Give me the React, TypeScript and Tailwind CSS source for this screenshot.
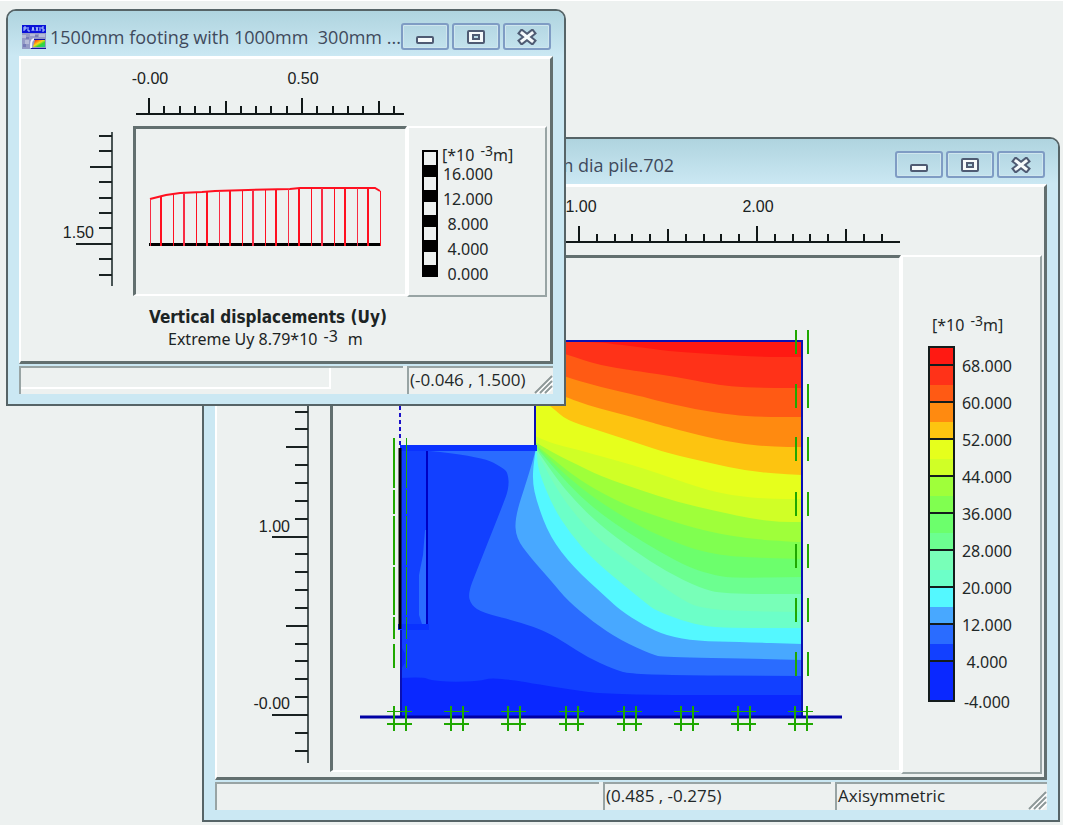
import React from 'react';

type Point = [number, number];

interface Tick {
  at: number;
  size: 'minor' | 'mid' | 'major';
}

interface WindowFrameProps {
  title: string;
  className: string;
  children: React.ReactNode;
}

// colours from the highest displacement to the lowest
const bandColors = [
  '#ff1912', '#ff3218', '#ff5a14', '#ff8a10', '#fdc410', '#e6ff1c',
  '#d0ff26', '#9fff3a', '#80ff50', '#6cff6c', '#6cff90', '#78ffb8',
  '#6cffc8', '#54f8ff', '#48a8ff', '#2a6cff', '#1240ff', '#0a28ff',
];

// contour i is the upper edge of band i + 1
const contours: Point[][] = [
  [[535, 341], [598, 342], [613, 344], [640, 347], [667, 351], [710, 354], [760, 357], [802, 357]],
  [[535, 345], [566, 354], [583, 360], [600, 365], [623, 369], [637, 371], [677, 377], [713, 384], [737, 387], [773, 388], [802, 388]],
  [[535, 366], [566, 377], [600, 387], [640, 396], [655, 400], [693, 409], [733, 415], [760, 417], [802, 417]],
  [[535, 385], [566, 397], [587, 405], [613, 412], [640, 419], [660, 425], [710, 438], [743, 444], [773, 447], [802, 447]],
  [[535, 395], [552, 407], [566, 420], [597, 430], [640, 444], [667, 453], [710, 463], [747, 471], [783, 474], [802, 475]],
  [[535, 436], [550, 443], [575, 449], [600, 456], [643, 468], [700, 488], [733, 496], [770, 499], [802, 499]],
  [[535, 442], [555, 454], [578, 465], [600, 476], [640, 490], [677, 502], [720, 512], [753, 519], [780, 522], [802, 522]],
  [[535, 444], [560, 465], [580, 480], [600, 492], [630, 507], [677, 523], [710, 532], [750, 539], [797, 542], [802, 542]],
  [[535, 445], [560, 470], [580, 487], [600, 502], [640, 527], [677, 543], [700, 551], [733, 557], [802, 559]],
  [[535, 446], [560, 475], [580, 496], [600, 513], [627, 532], [660, 552], [690, 568], [717, 576], [735, 578], [802, 577]],
  [[535, 447], [555, 477], [577, 503], [600, 525], [633, 550], [667, 572], [700, 588], [723, 594], [802, 594]],
  [[535, 448], [552, 482], [575, 515], [600, 541], [633, 565], [663, 587], [683, 600], [697, 607], [730, 611], [802, 612]],
  [[536, 448], [537, 453], [538, 470], [553, 507], [570, 533], [593, 560], [647, 604], [655, 610], [680, 620], [707, 627], [740, 628], [802, 628]],
  [[536, 448], [535, 453], [532, 480], [537, 503], [550, 537], [573, 567], [607, 598], [620, 610], [643, 625], [667, 636], [697, 641], [740, 642], [802, 644]],
  [[536, 448], [535, 453], [527, 480], [515, 517], [516, 538], [530, 557], [553, 583], [567, 600], [593, 622], [620, 640], [653, 655], [663, 657], [760, 659], [802, 660]],
  [[440, 452], [483, 457], [503, 468], [508, 473], [509, 488], [502, 507], [490, 537], [477, 570], [468, 593], [471, 605], [483, 613], [520, 622], [547, 632], [567, 644], [587, 657], [613, 669], [633, 675], [802, 676]],
  [[400, 678], [423, 677], [430, 680], [450, 682], [480, 681], [490, 678], [513, 680], [530, 683], [567, 689], [610, 695], [802, 695]],
];

const toPoints = (points: Point[]) => points.map(p => p.join(',')).join(' ');

// rounds the corners of a contour: each inner point pulls the curve between two midpoints
const toCurve = (points: Point[]) => {
  const inner = points.slice(1, -1).map(([x, y], i) => {
    const next = points[i + 2];
    return `Q${x} ${y} ${(x + next[0]) / 2} ${(y + next[1]) / 2}`;
  });
  return `M${points[0].join(' ')}${inner.join('')}L${points[points.length - 1].join(' ')}`;
};

const makeTicks = (start: number, step: number, count: number, firstIndex: number): Tick[] =>
  Array.from({ length: count }, (_, i) => {
    const n = i + firstIndex;
    return {
      at: Math.round(start + i * step),
      size: n % 10 === 0 ? 'major' : n % 5 === 0 ? 'mid' : 'minor',
    };
  });

const PlaxisIcon = () => (
  <svg className="h-6 w-6 shrink-0" viewBox="0 0 24 24" aria-hidden="true">
    <linearGradient id="screen" x1="0" y1="0" x2="1" y2="1">
      <stop offset="0.15" stopColor="#ff4a10" />
      <stop offset="0.45" stopColor="#f8d818" />
      <stop offset="0.65" stopColor="#38d830" />
      <stop offset="1" stopColor="#20c890" />
    </linearGradient>
    <rect width="24" height="24" fill="#949bc6" />
    <path d="M0 10h4v3H0zM3 15h4v4H3zM8 9h5v2H8zM17 9h6v3h-6z" fill="#b6bcd8" />
    <path d="M4 12h3v2H4zM13 10h3v2h-3zM1 19h3v3H1z" fill="#767cb8" />
    <rect width="24" height="8" fill="#0a12d8" />
    <path d="M2 6V2h2v2H2M6 2v4h2M10 6l1-4 1 4M14 2l2 4M16 2l-2 4M18 2v4M22 2h-2v2h2v2h-2" stroke="#b8d4ff" fill="none" />
    <path d="M9 23c0-5 0-8 3-9" stroke="#f4f4ff" strokeWidth="2" fill="none" />
    <path d="M13 15h10v7H11z" fill="url(#screen)" />
    <path d="M9 23.5h15M12 14.5h11" stroke="#1414a0" />
  </svg>
);

const MinimizeGlyph = () => (
  <svg className="h-4 w-5 shrink-0" viewBox="0 0 20 16">
    <rect x="2" y="8" width="16" height="6" rx="1" fill="#f6fafb" stroke="#4f5b73" strokeWidth="2" />
  </svg>
);

const MaximizeGlyph = () => (
  <svg className="h-4 w-5 shrink-0" viewBox="0 0 20 16">
    <rect x="2" y="2" width="16" height="12" rx="1" fill="#f6fafb" stroke="#4f5b73" strokeWidth="2" />
    <rect x="7" y="6" width="6" height="4" fill="#b9dae6" stroke="#4f5b73" strokeWidth="2" />
  </svg>
);

const CloseGlyph = () => (
  <svg className="h-4 w-5 shrink-0" viewBox="0 0 20 16">
    <path d="M5 4l10 8M15 4L5 12" stroke="#4f5b73" strokeWidth="7" strokeLinecap="square" />
    <path d="M5 4l10 8M15 4L5 12" stroke="#f6fafb" strokeWidth="3" strokeLinecap="square" />
  </svg>
);

const captionButtons = [
  { label: 'Minimize', glyph: <MinimizeGlyph /> },
  { label: 'Maximize', glyph: <MaximizeGlyph /> },
  { label: 'Close', glyph: <CloseGlyph /> },
];

const WindowFrame: React.FC<WindowFrameProps> = ({ title, className, children }) => (
  <section
    className={`absolute flex flex-col rounded-t-[10px] border-2 border-[#566467] bg-[#cbe8f3] px-[11px] pb-[10px] ${className}`}
  >
    <header className="-mx-[11px] flex h-[45px] shrink-0 items-center rounded-t-lg bg-linear-to-b from-[#afd4df] to-[#cbe8f3] pt-[6px] pr-[13px] pl-[14px]">
      <PlaxisIcon />
      <h1 className="min-w-0 flex-1 pl-1 font-['Open_Sans',sans-serif] text-[18px] leading-6 whitespace-pre text-[#3f4a5c]">
        {title}
      </h1>
      <div className="flex gap-[3px]">
        {captionButtons.map(button => (
          <button
            key={button.label}
            type="button"
            aria-label={button.label}
            className="flex h-[27px] w-12 items-center justify-center rounded-[3px] border-2 border-[#7f9cc4] bg-linear-to-b from-[#b4d7e3] to-[#c3e2ed] shadow-[inset_0_0_0_1px_#cfe6ee]"
          >
            {button.glyph}
          </button>
        ))}
      </div>
    </header>
    {children}
  </section>
);

const StatusField: React.FC<{ className: string; children?: React.ReactNode }> = ({ className, children }) => (
  <div className={`h-7 overflow-hidden border-t-2 border-l-2 border-[#98a4a4] px-px font-['Open_Sans',sans-serif] text-[17px] leading-6 whitespace-nowrap text-[#1f2828] ${className}`}>
    {children}
  </div>
);

const SizeGrip = () => (
  <svg className="absolute right-0 bottom-0 h-5 w-5" viewBox="0 0 20 20" aria-hidden="true">
    <path d="M3 19L19 3M8 19L19 8M13 19l6-6" stroke="#fff" strokeWidth="4" />
    <path d="M2 19L19 2M7 19L19 7M12 19l7-7" stroke="#8d9898" strokeWidth="2" />
  </svg>
);

const LegendUnit = () => (
  <div className="flex h-[18px] items-end text-[16px] leading-[18px] whitespace-nowrap">
    <span>[*10</span>
    <span className="self-start pl-[6px] text-[14px] leading-[10px]">-3</span>
    <span>m]</span>
  </div>
);

const Support = ({ x }: { x: number }) => (
  <g stroke="#1fa800" shapeRendering="crispEdges">
    <path d={`M${x} 706v25M${x + 12} 706v25M${x - 7} 724h25`} strokeWidth="2" />
    <path d={`M${x - 7} 711.5h25`} />
  </g>
);

const ContourPlot = () => (
  <svg className="h-[512px] w-full" viewBox="333 258 517 512" preserveAspectRatio="xMinYMin meet">
    <clipPath id="soil">
      <path d="M535 341H802V717H400V448H535z" />
    </clipPath>
    <g clipPath="url(#soil)">
      <rect x="400" y="341" width="402" height="376" fill={bandColors[0]} />
      {contours.map((points, i) => (
        <path
          key={i}
          d={`${toCurve(points)}V717H400V448z`}
          fill={bandColors[i + 1]}
        />
      ))}
      <path d="M425 530l-2 25-4 20v40l3 9h5v-94z" fill="#2a6cff" />
      <path d="M400 645l5 8v10l-5 8z" fill="#0a28ff" />
    </g>
    <path d="M400 406v42" stroke="#1a10c8" strokeWidth="2" strokeDasharray="4 3" />
    <path d="M535 448V341H802V717M401 630v87" stroke="#0a10b4" strokeWidth="2" fill="none" />
    <path d="M427 451v173" stroke="#0000c4" strokeWidth="2" />
    <path d="M360 717h482" stroke="#0000a4" strokeWidth="3" />
    <path d="M400 448h137M398 627h31" stroke="#0a32ff" strokeWidth="6" />
    <path d="M400 448v181" stroke="#000" strokeWidth="3" />
    <g stroke="#1fa800" strokeWidth="2" shapeRendering="crispEdges">
      <path d="M394 438v50m0 2v24m0 2v49m0 2v48m0 2v22m0 5v24" />
      <path d="M406.5 438v50m0 2v24m0 2v49m0 2v48m0 2v22m0 5v24" strokeWidth="1" />
      {[330, 384, 437, 492, 544, 598, 652].map(y => (
        <path key={y} d={`M796 ${y}v24M808 ${y}v24`} />
      ))}
    </g>
    {[394, 451, 508, 566, 624, 681, 738, 795].map(x => (
      <Support key={x} x={x} />
    ))}
  </svg>
);

const profile: Point[] = [
  [150, 199], [158, 197], [166, 195], [180, 193], [202, 192], [215, 191],
  [248, 190], [290, 189], [300, 188], [375, 188], [380, 191],
];

const profileHeight = (x: number) => {
  const i = profile.findIndex(p => p[0] >= x);
  if (i <= 0) return profile[0][1];
  const [x0, y0] = profile[i - 1];
  const [x1, y1] = profile[i];
  return y0 + ((x - x0) / (x1 - x0)) * (y1 - y0);
};

const DisplacementPlot = () => (
  <svg className="h-[165px] w-full" viewBox="136 129 250 165" preserveAspectRatio="xMinYMin meet">
    <path d="M149 244.5h232" stroke="#000" strokeWidth="3" />
    <polyline points={toPoints(profile)} fill="none" stroke="#ff1020" strokeWidth="2" />
    {Array.from({ length: 21 }, (_, i) => 150 + i * 11.5).map((x, i) => (
      <path
        key={x}
        d={`M${Math.floor(x) + (i % 2 ? 0 : 0.5)} ${profileHeight(x)}V246`}
        stroke={i % 3 === 0 ? '#f82c44' : '#ff1020'}
        strokeWidth={i % 2 ? 2 : 1}
        shapeRendering="crispEdges"
      />
    ))}
  </svg>
);

const tickLength = {
  minor: 8,
  mid: 13,
  major: 16,
};

const sideTickLength = {
  minor: 13,
  mid: 22,
  major: 36,
};

const rulerText = "fill-[#1a2222] font-['Liberation_Sans',sans-serif] text-[16px]";

const mainTopTicks = makeTicks(401, 17.8, 28, 0);
const mainSideTicks = makeTicks(358, 17.85, 23, -10);
const smallTopTicks = makeTicks(149, 15.3, 17, 0).map(t => (t.at === 302 ? { ...t, size: 'major' as const } : t));
const smallSideTicks = makeTicks(136, 15.4, 10, 3).map(t => (t.at === 244 ? { ...t, size: 'major' as const } : t));

const mainLegendLabels = ['68.000', '60.000', '52.000', '44.000', '36.000', '28.000', '20.000', '12.000', '4.000'];

const MainLegend = () => (
  <aside className="flex h-[519px] flex-col border-2 border-t-white border-r-[#98a4a4] border-b-[#98a4a4] border-l-white pt-[59px] pl-[25px] font-['Noto_Sans',sans-serif] text-[16px] text-[#1f2828]">
    <div className="pl-1">
      <LegendUnit />
    </div>
    <div className="mt-3 flex items-start">
      <div className="w-[27px] border-2 border-[#141c1c]">
        {bandColors.slice(0, 17).map((color, i) => (
          <div
            key={color}
            className={i % 2 === 0 ? 'h-[18px] border-b-2 border-[#141c1c]' : 'h-[19px]'}
            style={{ backgroundColor: color }}
          />
        ))}
        <div className="h-[38px] bg-[#0a28ff]" />
      </div>
      <ul className="w-16 pt-[2px] text-center leading-[37px]">
        {mainLegendLabels.map(label => (
          <li key={label}>{label}</li>
        ))}
        <li className="pt-[3px]">-4.000</li>
      </ul>
    </div>
  </aside>
);

const MainWindow = () => (
  <WindowFrame
    title="1500mm footing with 1000mm 300mm dia pile.702"
    className="top-[136px] right-[3px] left-[202px] h-[685px] min-w-[760px]"
  >
    <div className="grid grow grid-cols-[113px_minmax(0,1fr)_141px] grid-rows-[68px_auto_1fr] border-t-[3px] border-r-[3px] border-b-[3px] border-l-2 border-t-white border-r-[#626f6f] border-b-[#626f6f] border-l-white bg-[#edf1f0] pr-[2px]">
      <svg className="col-span-2 col-start-1 h-[68px] w-full overflow-visible" viewBox="217 187 600 68" preserveAspectRatio="xMinYMin meet">
        <path d="M390 242h510" stroke="#111818" strokeWidth="2" />
        {mainTopTicks.map(tick => (
          <path key={tick.at} d={`M${tick.at} 242v-${tickLength[tick.size]}`} stroke="#111818" strokeWidth="2" />
        ))}
        <text x="581" y="212" textAnchor="middle" className={rulerText}>1.00</text>
        <text x="758" y="212" textAnchor="middle" className={rulerText}>2.00</text>
      </svg>
      <svg className="col-start-1 h-[516px] w-[113px]" viewBox="217 255 113 516">
        <path d="M308 340v423" stroke="#4a5555" strokeWidth="2" />
        {mainSideTicks.map(tick => (
          <path key={tick.at} d={`M308 ${tick.at}h-${sideTickLength[tick.size]}`} stroke="#1a2222" strokeWidth="2" />
        ))}
        <text x="290" y="532" textAnchor="end" className={rulerText}>1.00</text>
        <text x="290" y="709" textAnchor="end" className={rulerText}>-0.00</text>
      </svg>
      <div className="h-[517px] border-t-[3px] border-r-2 border-b-2 border-l-[3px] border-t-[#626f6f] border-r-white border-b-white border-l-[#626f6f]">
        <ContourPlot />
      </div>
      <MainLegend />
    </div>
    <footer className="relative mt-[2px] flex gap-1 bg-[#edf1f0]">
      <StatusField className="flex-1" />
      <StatusField className="w-[228px]">(0.485 , -0.275)</StatusField>
      <StatusField className="w-[212px]">Axisymmetric</StatusField>
      <SizeGrip />
    </footer>
  </WindowFrame>
);

const SmallLegend = () => (
  <aside className="flex h-[171px] items-start border-2 border-t-white border-r-[#98a4a4] border-b-[#98a4a4] border-l-white pt-[22px] pl-[13px] font-['Noto_Sans',sans-serif] text-[16px] text-[#1f2828]">
    <div className="w-4 border-2 border-b-0 border-black">
      {Array.from({ length: 5 }, (_, i) => (
        <div key={i} className="h-[25px] border-b-[12px] border-black" />
      ))}
    </div>
    <div className="-mt-1 pl-1">
      <LegendUnit />
      <ul className="-mt-[2px] w-[52px] text-center leading-[25px]">
        {['16.000', '12.000', '8.000', '4.000', '0.000'].map(label => (
          <li key={label}>{label}</li>
        ))}
      </ul>
    </div>
  </aside>
);

const SmallWindow = () => (
  <WindowFrame
    title="1500mm footing with 1000mm  300mm ..."
    className="top-2 left-[6px] h-[397px] w-[560px]"
  >
    <div className="grid grow grid-cols-[112px_minmax(0,1fr)_140px] grid-rows-[67px_171px_1fr] border-t-[3px] border-r-[3px] border-b-[3px] border-l-2 border-t-white border-r-[#626f6f] border-b-[#626f6f] border-l-white bg-[#edf1f0] pr-[3px]">
      <svg className="col-span-3 h-[67px] w-full" viewBox="21 59 400 67" preserveAspectRatio="xMinYMin meet">
        <path d="M136 114h268" stroke="#111818" strokeWidth="2" />
        {smallTopTicks.map(tick => (
          <path key={tick.at} d={`M${tick.at} 114v-${tickLength[tick.size]}`} stroke="#111818" strokeWidth="2" />
        ))}
        <text x="150" y="84" textAnchor="middle" className={rulerText}>-0.00</text>
        <text x="303" y="84" textAnchor="middle" className={rulerText}>0.50</text>
      </svg>
      <svg className="h-[169px] w-[112px]" viewBox="21 126 112 169">
        <path d="M112 132v154" stroke="#4a5555" strokeWidth="2" />
        {smallSideTicks.map(tick => (
          <path key={tick.at} d={`M112 ${tick.at}h-${sideTickLength[tick.size]}`} stroke="#1a2222" strokeWidth="2" />
        ))}
        <text x="94" y="238" textAnchor="end" className={rulerText}>1.50</text>
      </svg>
      <div className="h-[170px] border-t-[3px] border-r-2 border-b-2 border-l-[3px] border-t-[#626f6f] border-r-white border-b-white border-l-[#626f6f]">
        <DisplacementPlot />
      </div>
      <SmallLegend />
      <div className="col-span-3 pt-[9px] pl-[128px] font-['Noto_Sans',sans-serif] text-[#1c2424]">
        <h2 className="font-['DejaVu_Sans_Condensed','DejaVu_Sans',sans-serif] text-[17px] leading-[22px] font-bold whitespace-nowrap">
          Vertical displacements (Uy)
        </h2>
        <p className="flex items-start pl-[19px] text-[16px] leading-[22px]">
          <span>Extreme Uy 8.79*10</span>
          <span className="pl-[6px] leading-4">-3</span>
          <span className="pl-[10px]">m</span>
        </p>
      </div>
    </div>
    <footer className="relative mt-[2px] flex gap-1 bg-[#edf1f0]">
      <StatusField className="flex-1 pr-[72px] pb-[5px] pl-0">
        <div className="h-full border-r-2 border-b-2 border-white" />
      </StatusField>
      <StatusField className="w-[146px]">(-0.046 , 1.500)</StatusField>
      <SizeGrip />
    </footer>
  </WindowFrame>
);

export default function App() {
  return (
    <main className="relative min-h-screen overflow-hidden border-t border-r-4 border-white bg-[#edf1f0]">
      <MainWindow />
      <SmallWindow />
    </main>
  );
}
